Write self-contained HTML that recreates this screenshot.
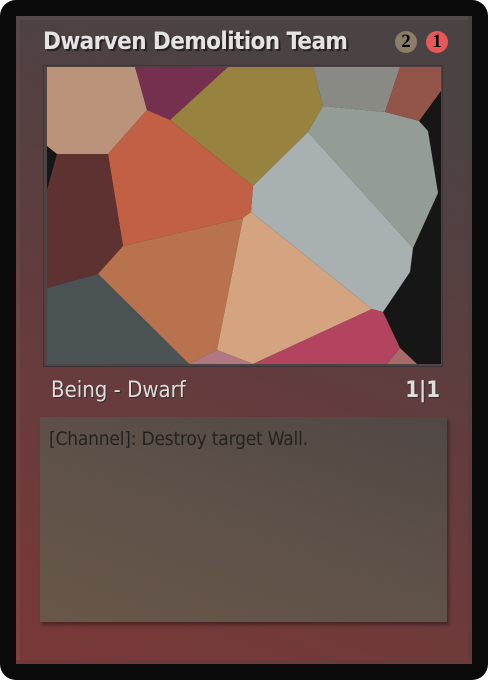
<!DOCTYPE html><html><head><style>
html,body{margin:0;padding:0;background:#fff;}
.c{position:relative;width:488px;height:680px;background:#0a0a0a;border-radius:16px;overflow:hidden;font-family:"DejaVu Sans","Liberation Sans",sans-serif;font-stretch:condensed;}
.p{position:absolute;left:16px;top:16px;width:456px;height:648px;background:linear-gradient(20deg,#7a3838 0%,#633c3d 45%,#4b4243 85%);box-shadow:inset 0 0 0 4px rgba(255,255,255,0.04),inset -4px -4px 0 rgba(0,0,0,0.12);}
.t{position:absolute;left:43px;top:27px;font-size:24px;font-weight:bold;color:#e4e4e4;text-shadow:2px 2px 0 #2a2222;letter-spacing:-0.6px;}
.m{position:absolute;top:31px;width:22px;height:22px;border-radius:50%;font-family:"Liberation Serif",serif;font-weight:bold;font-size:19px;line-height:22px;text-align:center;color:#000;}
.f{position:absolute;left:44px;top:66px;width:398px;height:300px;background:#4e4446;box-shadow:0 0 0 1px #3c3436;}
.ty{position:absolute;left:51px;top:378px;font-size:22px;color:#dedede;text-shadow:1px 1px 0 #3a2a2a;}
.pt{position:absolute;right:48px;top:378px;font-size:22px;font-weight:bold;color:#dedede;text-shadow:1px 1px 0 #3a2a2a;}
.b{position:absolute;left:40px;top:417px;width:407px;height:205px;background:linear-gradient(20deg,#68574a 0%,#5e5148 50%,#4f4845 100%);box-shadow:2px 3px 3px rgba(0,0,0,0.35);}
.bt{position:absolute;left:49px;top:428px;font-size:19px;color:#222;letter-spacing:-0.2px;}
</style></head><body><div class="c"><div class="p"></div>
<div class="t">Dwarven Demolition Team</div>
<div class="m" style="left:395px;background:#8a7e66;">2</div>
<div class="m" style="left:426px;background:#e85858;">1</div>
<div class="f"></div>
<svg style="position:absolute;left:47px;top:67px" width="394" height="297" viewBox="47 67 394 297">
<rect x="47" y="67" width="394" height="297" fill="#161616"/>
<polygon fill="#bb937b" points="47,67 135,67 147,110 108,154 57,154 47,146"/>
<polygon fill="#74304e" points="135,67 228,67 170,120 147,110"/>
<polygon fill="#988240" points="228,67 313,67 323,106 308,132 253,186 170,120"/>
<polygon fill="#8a8a85" points="313,67 400,67 385,112 323,106"/>
<polygon fill="#93544a" points="400,67 441,67 441,91 419,121 385,112"/>
<polygon fill="#939d96" points="323,106 385,112 419,121 428,131 438,193 413,248 308,132"/>
<polygon fill="#a8b0b2" points="308,132 413,248 410,272 383,312 372,309 251,212 253,186"/>
<polygon fill="#c26045" points="147,110 170,120 253,186 251,212 243,218 123,246 108,154"/>
<polygon fill="#5e3230" points="57,154 108,154 123,246 98,274 47,288 47,190"/>
<polygon fill="#b8734e" points="123,246 243,218 217,350 189,364 98,274"/>
<polygon fill="#d4a481" points="243,218 251,212 372,309 253,364 217,350"/>
<polygon fill="#4a5254" points="47,288 98,274 189,364 47,364"/>
<polygon fill="#b07880" points="189,364 217,350 253,364"/>
<polygon fill="#b2445f" points="253,364 372,309 383,312 400,348 387,364"/>
<polygon fill="#a86a66" points="387,364 400,348 417,364"/>
</svg>
<div class="ty">Being - Dwarf</div>
<div class="pt">1|1</div>
<div class="b"></div>
<div class="bt">[Channel]: Destroy target Wall.</div>
</div></body></html>
